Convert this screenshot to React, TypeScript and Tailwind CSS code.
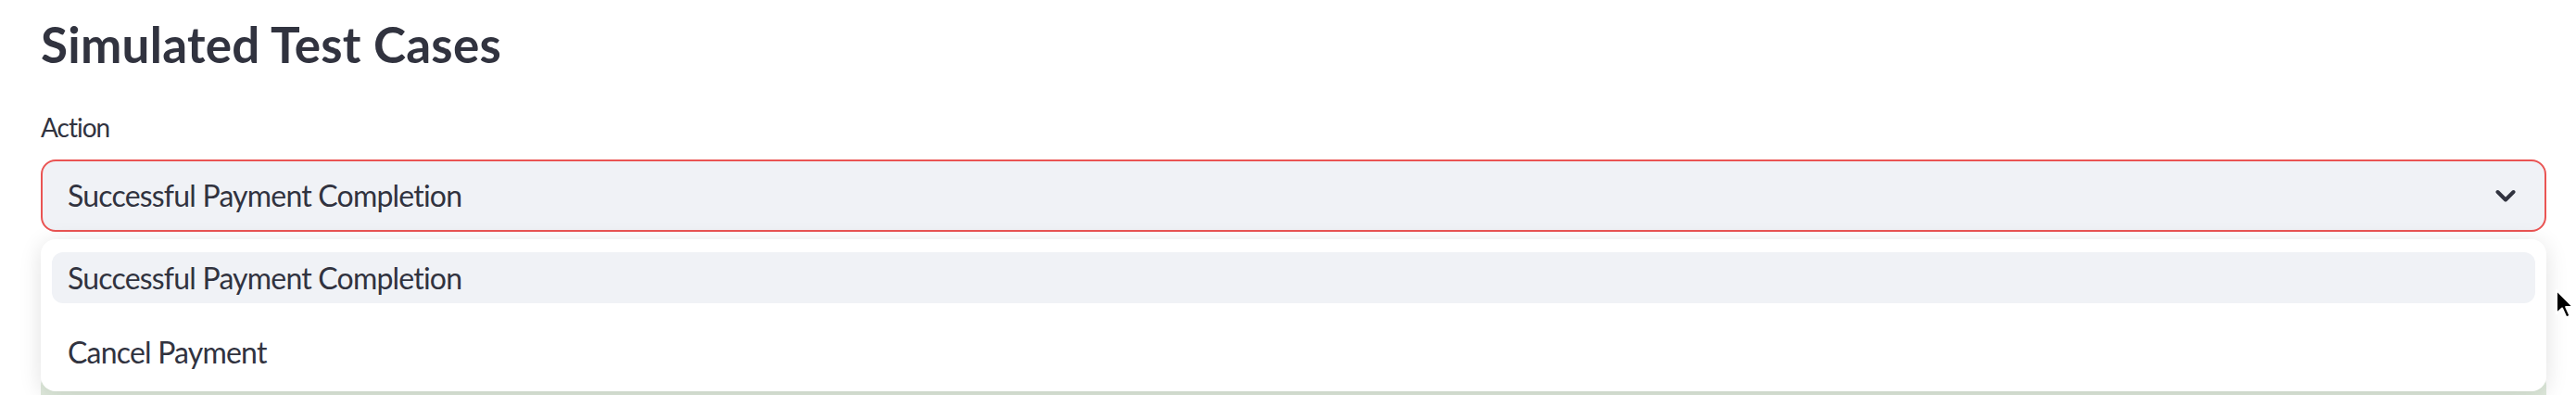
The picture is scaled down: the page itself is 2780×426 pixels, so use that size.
import { useState } from 'react';

/**
 * Simulated test cases — a select box with its option menu opened.
 */
const options = ['Successful Payment Completion', 'Cancel Payment'];

export default function App() {
  const [value, setValue] = useState(options[0]);
  const [open, setOpen] = useState(true);

  return (
    <div className="relative h-[426px] bg-white pl-[44px] pr-[32px] pt-[16px] text-[#31333F] overflow-hidden [font-family:Lato,'Noto_Sans',sans-serif]">
      <h2 className="text-[53px] leading-[64px] font-bold tracking-[0.25px]">Simulated Test Cases</h2>

      <label className="mt-[39px] block text-[28px] leading-[36px] tracking-[-1px]">Action</label>

      <div className="relative mt-[17px]">
        <button
          type="button"
          onClick={() => setOpen(o => !o)}
          className="flex h-[78px] w-full items-center justify-between rounded-[16px] border-2 border-[#ea5453] bg-[#f0f2f6] pl-[27px] pr-[30px] text-left"
        >
          <span className="text-[32px] leading-[40px] tracking-[-0.8px]">{value}</span>
          <svg width="22" height="15" viewBox="0 0 22 15" fill="none" className="mr-[1px]">
            <path d="M2.5 3 L11 11.5 L19.5 3" stroke="#31333F" strokeWidth="4" strokeLinecap="round" strokeLinejoin="round" />
          </svg>
        </button>

        {/* success alert peeking out below the open menu */}
        <div className="mt-[150px] h-[26px] rounded-t-[16px] bg-[#dfeadc]" />

        {open && (
          <div className="absolute left-0 right-0 top-[86px] z-10 flex h-[164px] flex-col gap-[25px] rounded-[16px] bg-white px-[12px] pt-[14px] shadow-[0_4px_24px_rgba(0,0,0,0.12)]">
            {options.map(opt => (
              <div
                key={opt}
                onClick={() => { setValue(opt); }}
                className={`flex h-[55px] shrink-0 items-center rounded-[12px] pl-[17px] text-[32px] leading-[40px] tracking-[-0.8px] ${
                  opt === value ? 'bg-[#f0f2f6]' : ''
                }`}
              >
                {opt}
              </div>
            ))}
          </div>
        )}
      </div>

      {/* mouse pointer */}
      <svg className="absolute left-[2757px] top-[311px] z-20" width="24" height="34" viewBox="0 0 24 34">
        <path d="M2 2 L2 27 L8 21.5 L12.5 31.5 L16.5 29.7 L12.2 20 L20 20 Z" fill="#000" stroke="#fff" strokeWidth="2" strokeLinejoin="round" />
      </svg>
    </div>
  );
}
